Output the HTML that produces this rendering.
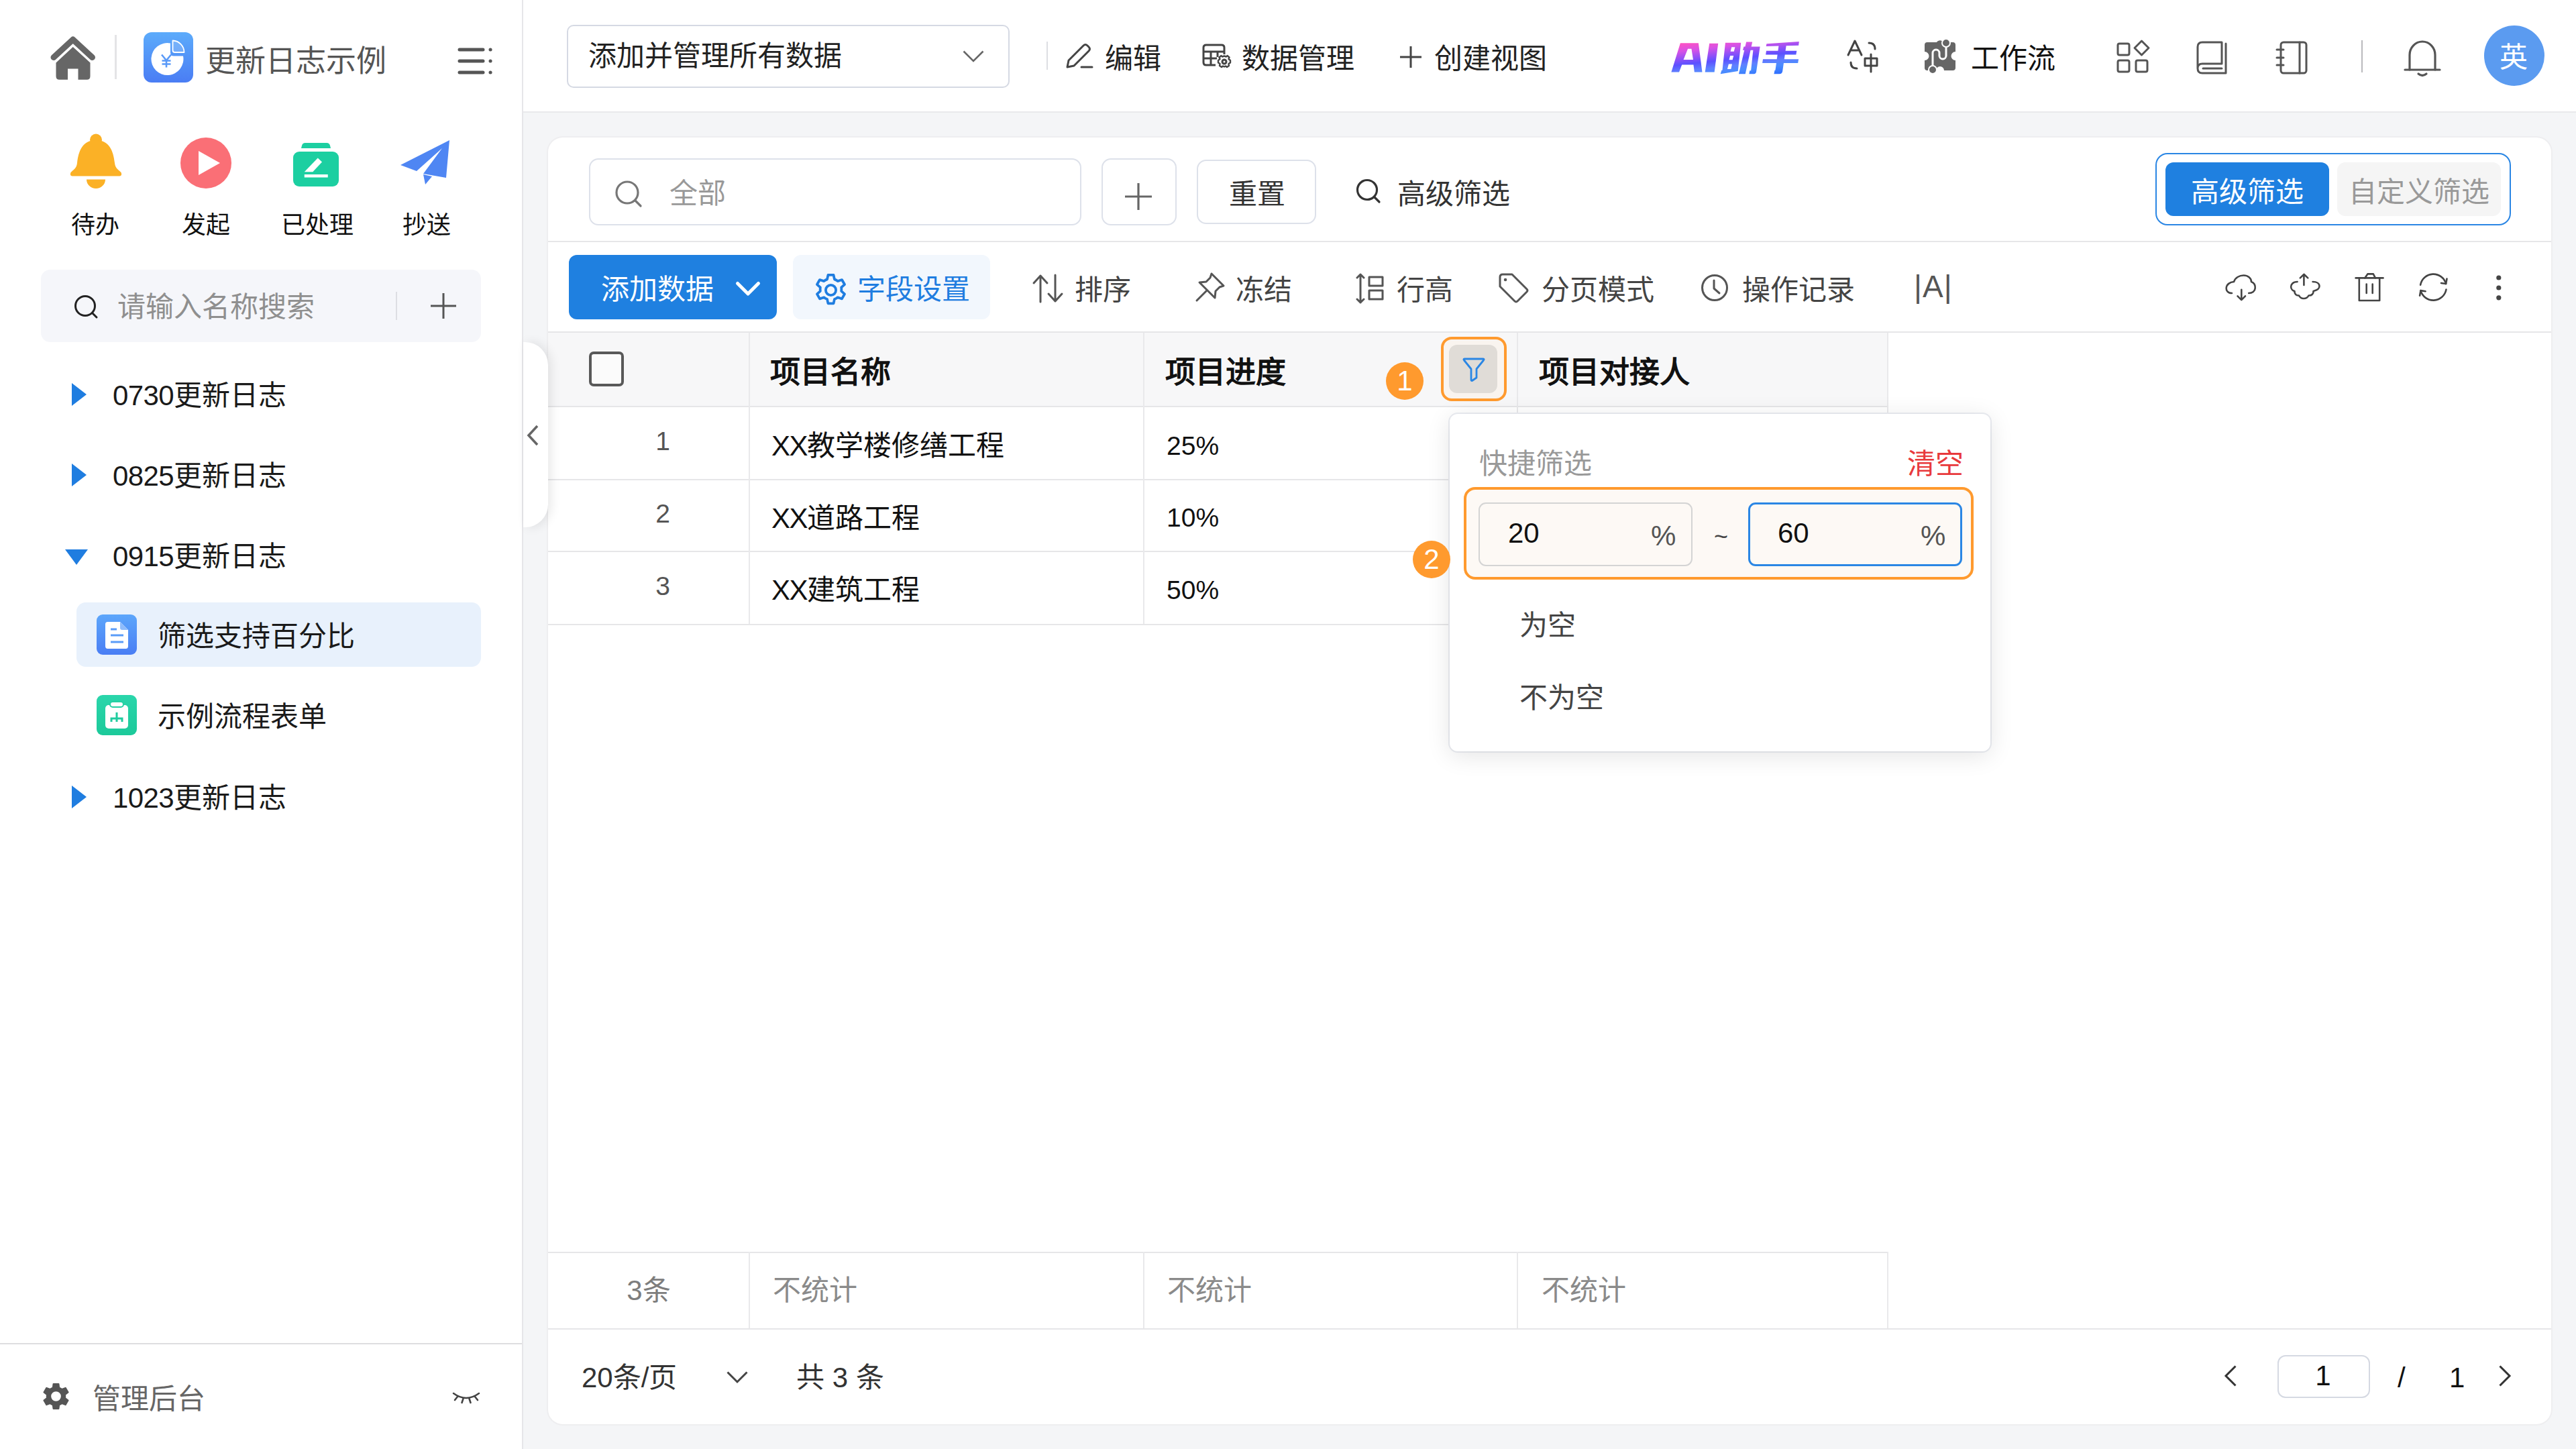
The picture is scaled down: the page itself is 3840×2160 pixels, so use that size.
<!DOCTYPE html>
<html lang="zh-CN">
<head>
<meta charset="utf-8">
<title>更新日志示例</title>
<style>
*{box-sizing:border-box;margin:0;padding:0}
html,body{width:3840px;height:2160px;overflow:hidden;background:#f4f5f7}
body{font-family:"Liberation Sans",sans-serif;font-size:42px;color:#1f1f1f;position:relative;line-height:1}
.abs{position:absolute}
svg{display:block;overflow:visible}
.t{position:absolute;white-space:nowrap;line-height:60px;height:60px}

/* ---------- sidebar ---------- */
#sidebar{position:absolute;left:0;top:0;width:780px;height:2160px;background:#fff;border-right:2px solid #e6e6e9}
#sb-title{left:306px;top:62px;font-size:45px;color:#555}
.quick{position:absolute;top:312px;width:160px;text-align:center;font-size:36px;line-height:48px;color:#111}
#sb-search{position:absolute;left:61px;top:402px;width:656px;height:108px;background:#f5f6fa;border-radius:14px}
#sb-search .ph{left:114px;top:26px;color:#8f8f8f}
.tree{position:absolute;left:0;width:780px;height:96px}
.tree .lbl{left:168px;top:20px;color:#1a1a1a}
.tree.sub .lbl{left:235px;top:21px}
.tree.sel:before{content:"";position:absolute;left:114px;top:0;width:603px;height:96px;background:#e8f1fc;border-radius:14px}
.dg{letter-spacing:-.6px}
.ticon{position:absolute;left:144px;top:18px;width:60px;height:60px;border-radius:9px}
#sb-foot{position:absolute;left:0;top:2002px;width:778px;height:158px;border-top:2px solid #dedee0;background:#fff}
#sb-foot .lbl{left:138px;top:52px;color:#666}

/* ---------- top bar ---------- */
#topbar{position:absolute;left:780px;top:0;width:3060px;height:168px;background:#fff;border-bottom:2px solid #e9e9ec}
#viewsel{position:absolute;left:65px;top:37px;width:660px;height:94px;border:2px solid #d5d9e3;border-radius:10px;background:#fff}
#viewsel .lbl{left:30px;top:15px;color:#222}
.tb-t{top:58px;color:#222}
#avatar{position:absolute;left:2923px;top:38px;width:90px;height:90px;border-radius:50%;background:#5b9bf0;color:#fff;text-align:center;line-height:96px;font-size:42px;text-indent:-3px}

/* ---------- card ---------- */
#card{position:absolute;left:817px;top:205px;width:2986px;height:1918px;background:#fff;border-radius:22px;box-shadow:0 0 0 2px #eeeef0}
.box{position:absolute;border:2px solid #dde1ea;border-radius:14px;background:#fff}
.hline{position:absolute;left:0;height:2px;background:#e6e6e8}
.vline{position:absolute;width:2px;background:#e9e9eb}
.tool{top:198px;color:#444}
.th{font-weight:bold;font-size:45px;color:#111;top:321px}
.td{color:#111}
.xx{letter-spacing:-1.5px}
.num{color:#555;font-size:39px;width:342px;text-align:center;left:0}
.sum{color:#8a8a8a;top:1689px}

/* ---------- popup ---------- */
#pop{position:absolute;left:2161px;top:617px;width:806px;height:503px;background:#fff;border-radius:12px;box-shadow:0 6px 36px rgba(0,0,0,.11),0 0 0 2px #eceef3;z-index:5}
.badge{z-index:6;position:absolute;width:56px;height:56px;border-radius:50%;background:#ff9a2e;color:#fff;font-size:42px;line-height:56px;text-align:center}
.inp{position:absolute;top:19px;width:319px;height:95px;border:2px solid #d4d4d4;border-radius:11px;background:#fdf9f5;font-size:42px}
.inp .v{left:42px;top:14px;color:#111}
.inp .p{left:255px;top:18px;color:#555}
</style>
</head>
<body>

<!-- ================= SIDEBAR ================= -->
<div id="sidebar">
  <!-- home -->
  <svg class="abs" style="left:74px;top:52px" width="70" height="68" viewBox="0 0 70 68"><path d="M6 33.500 L34.750 7 L63.500 33.500" fill="none" stroke="#666" stroke-width="9" stroke-linecap="round" stroke-linejoin="round"/><path d="M34.750 18 L60.500 41.500 V61.500 Q60.500 66.750 55.500 66.750 H42.500 V50.500 H27 V66.750 H14.500 Q9.500 66.750 9.500 61.500 V41.500 Z" fill="#666"/></svg>
  <div class="abs" style="left:171px;top:52px;width:3px;height:66px;background:#e4e4e6"></div>
  <!-- app icon -->
  <svg class="abs" style="left:214px;top:48px" width="74" height="75" viewBox="0 0 74 75"><defs><linearGradient id="ga" x1="0" y1="0" x2="0" y2="1"><stop offset="0" stop-color="#5cabfb"/><stop offset="1" stop-color="#4a7df4"/></linearGradient></defs><rect width="74" height="75" rx="12" fill="url(#ga)"/><path d="M40 16.500 A24 24 0 1 0 59 35.500 L45 35.500 Q40 35.500 40 30.500 Z" fill="#fff"/><path d="M43.500 12.500 A17.500 17.500 0 0 1 60.500 30 H46.500 Q43.500 30 43.500 27 Z" fill="#fff" fill-opacity=".18" stroke="#fff" stroke-width="1.800" stroke-linejoin="round"/><path d="M27 33.500 l7 8.500 l7 -8.500 M34 42 v10.500 M27.500 42.500 h13 M27.500 47.500 h13" stroke="#5a9af8" stroke-width="2.600" fill="none"/></svg>
  <div class="t" id="sb-title">更新日志示例</div>
  <!-- menu icon -->
  <svg class="abs" style="left:682px;top:70px" width="54" height="42" viewBox="0 0 54 42"><g stroke="#555" stroke-width="5" stroke-linecap="round"><path d="M3 4 H38 M3 21 H38 M3 38 H38"/><path d="M49 4 h.1 M49 21 h.1 M49 38 h.1"/></g></svg>

  <!-- quick actions -->
  <svg class="abs" style="left:104px;top:199px" width="78" height="83" viewBox="0 0 78 83"><circle cx="39" cy="9.500" r="9" fill="#fbb126"/><path d="M39 10 C19 10 13 26 11 44 C10 53 5 54 1.500 58 Q-.5 63 4 63.500 H74 Q78.500 63 76.500 58 C73 54 68 53 67 44 C65 26 59 10 39 10 Z" fill="#fbb126"/><path d="M25 68.500 H53 A14 13.500 0 0 1 25 68.500 Z" fill="#fbb126"/></svg>
  <svg class="abs" style="left:269px;top:205px" width="76" height="76" viewBox="0 0 76 76"><circle cx="38" cy="38" r="38" fill="#fa6f76"/><path d="M27 20 L59 38 L27 56 Z" fill="#fff"/></svg>
  <svg class="abs" style="left:437px;top:213px" width="68" height="65" viewBox="0 0 68 65"><path d="M18 0 H50 Q54 0 55 4 L56 8 H12 L13 4 Q14 0 18 0 Z" fill="#1ccfa1"/><rect x="0" y="13" width="68" height="52" rx="9" fill="#1ccfa1"/><path d="M16.750 43.250 L36.750 22.500 L43 28.500 L29.250 43.250 Z" fill="#fff"/><rect x="16.750" y="47" width="35" height="4.500" fill="#fff"/></svg>
  <svg class="abs" style="left:597px;top:209px" width="74" height="67" viewBox="0 0 74 67"><path d="M73 0 L0 37 L24 46 L62 12 L34 50 L68 56 Z" fill="#4f86f3"/><path d="M34 51 L47 54 L37 66 Z" fill="#4f86f3"/></svg>
  <div class="quick" style="left:62px">待办</div>
  <div class="quick" style="left:227px">发起</div>
  <div class="quick" style="left:393px">已处理</div>
  <div class="quick" style="left:556px">抄送</div>

  <!-- search -->
  <div id="sb-search">
    <svg class="abs" style="left:49px;top:37px" width="38" height="38" viewBox="0 0 38 38"><circle cx="17" cy="17" r="14.500" fill="none" stroke="#222" stroke-width="3"/><path d="M27.500 27.500 L34 34" stroke="#222" stroke-width="3" stroke-linecap="round"/></svg>
    <div class="t ph">请输入名称搜索</div>
    <div class="abs" style="left:529px;top:33px;width:2px;height:42px;background:#dddee3"></div>
    <svg class="abs" style="left:580px;top:34px" width="40" height="40" viewBox="0 0 40 40"><path d="M20 1 V39 M1 20 H39" stroke="#555" stroke-width="3"/></svg>
  </div>

  <!-- tree -->
  <div class="tree" style="top:540px"><svg class="abs" style="left:107px;top:31px" width="22" height="34" viewBox="0 0 22 34"><path d="M0 0 L22 17 L0 34 Z" fill="#1f7de0"/></svg><div class="t lbl"><span class="dg">0730</span>更新日志</div></div>
  <div class="tree" style="top:660px"><svg class="abs" style="left:107px;top:31px" width="22" height="34" viewBox="0 0 22 34"><path d="M0 0 L22 17 L0 34 Z" fill="#1f7de0"/></svg><div class="t lbl"><span class="dg">0825</span>更新日志</div></div>
  <div class="tree" style="top:780px"><svg class="abs" style="left:97px;top:39px" width="34" height="23" viewBox="0 0 34 23"><path d="M0 0 H34 L17 23 Z" fill="#1f7de0"/></svg><div class="t lbl"><span class="dg">0915</span>更新日志</div></div>
  <div class="tree sub sel" style="top:898px">
    <svg class="ticon" viewBox="0 0 60 60"><defs><linearGradient id="gb" x1="0" y1="0" x2="0" y2="1"><stop offset="0" stop-color="#5ca6fb"/><stop offset="1" stop-color="#4a7ef4"/></linearGradient></defs><rect width="60" height="60" rx="9" fill="url(#gb)"/><path d="M16.500 11 H35 L47 23 V47 Q47 51 43.500 51 H16.500 Q13 51 13 47 V14.500 Q13 11 16.500 11 Z" fill="#fff"/><path d="M35 11 V20 Q35 23 38 23 H47 Z" fill="#8fbcfb"/><path d="M21 22 H30 M21 31 H40 M21 41 H40" stroke="#5a9cf8" stroke-width="3"/></svg>
    <div class="t lbl">筛选支持百分比</div>
  </div>
  <div class="tree sub" style="top:1018px">
    <svg class="ticon" viewBox="0 0 60 60"><defs><linearGradient id="gc" x1="0" y1="0" x2="0" y2="1"><stop offset="0" stop-color="#2ad6ab"/><stop offset="1" stop-color="#1cc99a"/></linearGradient></defs><rect width="60" height="60" rx="9" fill="url(#gc)"/><rect x="13" y="15" width="34" height="35" rx="5" fill="#fff"/><rect x="20" y="10" width="20" height="8" rx="4" fill="#fff" stroke="#25d0a3" stroke-width="2"/><path d="M30 26 v7 M22 40 v-5 h16 v5 M30 33 v7" stroke="#20cc9f" stroke-width="3" fill="none"/></svg>
    <div class="t lbl">示例流程表单</div>
  </div>
  <div class="tree" style="top:1140px"><svg class="abs" style="left:107px;top:31px" width="22" height="34" viewBox="0 0 22 34"><path d="M0 0 L22 17 L0 34 Z" fill="#1f7de0"/></svg><div class="t lbl"><span class="dg">1023</span>更新日志</div></div>

  <!-- footer -->
  <div id="sb-foot">
    <svg class="abs" style="left:59px;top:53px" width="49" height="49" viewBox="0 0 24 24"><path fill="#555" d="M19.14 12.94c.04-.3.06-.61.06-.94 0-.32-.02-.64-.07-.94l2.03-1.58a.49.49 0 0 0 .12-.61l-1.92-3.32a.49.49 0 0 0-.59-.22l-2.39.96c-.5-.38-1.03-.7-1.62-.94l-.36-2.54a.48.48 0 0 0-.48-.41h-3.84c-.24 0-.43.17-.47.41l-.36 2.54c-.59.24-1.13.57-1.62.94l-2.39-.96a.49.49 0 0 0-.59.22L2.74 8.87c-.12.21-.08.47.12.61l2.03 1.58c-.05.3-.09.63-.09.94s.02.64.07.94l-2.03 1.58a.49.49 0 0 0-.12.61l1.92 3.32c.12.22.37.29.59.22l2.39-.96c.5.38 1.03.7 1.62.94l.36 2.54c.05.24.24.41.48.41h3.84c.24 0 .44-.17.47-.41l.36-2.54c.59-.24 1.13-.56 1.62-.94l2.39.96c.22.08.47 0 .59-.22l1.92-3.32c.12-.22.07-.47-.12-.61l-2.01-1.58zM12 15.6A3.6 3.6 0 1 1 12 8.4a3.6 3.6 0 0 1 0 7.2z"/></svg>
    <div class="t lbl">管理后台</div>
    <svg class="abs" style="left:674px;top:70px" width="42" height="20" viewBox="0 0 42 20"><g fill="none" stroke="#444" stroke-width="2.6" stroke-linecap="round"><path d="M2 3 Q21 17 40 3"/><path d="M8 8 L4 13 M16.500 11 L14.500 17 M25.500 11 L27.500 17 M34 8 L38 13"/></g></svg>
  </div>
</div>

<!-- ================= TOP BAR ================= -->
<div id="topbar">
  <div id="viewsel">
    <div class="t lbl">添加并管理所有数据</div>
    <svg class="abs" style="left:588px;top:36px" width="32" height="18" viewBox="0 0 32 18"><path d="M1.500 1.500 L16 16 L30.500 1.500" fill="none" stroke="#666" stroke-width="2.600"/></svg>
  </div>
  <div class="abs" style="left:780px;top:62px;width:2px;height:42px;background:#dddee3"></div>
  <!-- edit -->
  <svg class="abs" style="left:808px;top:65px" width="42" height="38" viewBox="0 0 42 38"><g fill="none" stroke="#444" stroke-width="3" stroke-linejoin="round" stroke-linecap="round"><path d="M3 35 L5 25 L27 3 Q30 0 33 3 L35 5 Q38 8 35 11 L13 33 Z"/><path d="M24 35 H40"/></g></svg>
  <div class="t tb-t" style="left:867px">编辑</div>
  <!-- data mgmt -->
  <svg class="abs" style="left:1012px;top:65px" width="44" height="38" viewBox="0 0 44 38"><g fill="none" stroke="#444" stroke-width="3"><path d="M33 16 V6 Q33 2 29 2 H6 Q2 2 2 6 V28 Q2 32 6 32 H20"/><path d="M2 12 H33 M2 22 H22 M13 12 V32 M23 12 V20"/><circle cx="33" cy="27" r="3"/><path d="M33 18.5 l3 1 l1.5 -1.5 l3 2.5 l-1 2.5 l2.5 2 v3.5 l-2.5 1.5 l.5 3 l-3 2 l-2 -1.5 l-2 1 l-2 -1 l-2 1.5 l-3 -2 l.5 -3 l-2.5 -1.5 v-3.500 l2.5 -2 l-1 -2.500 l3 -2.500 l1.500 1.500 z" stroke-width="2.4" stroke-linejoin="round"/></g></svg>
  <div class="t tb-t" style="left:1071px">数据管理</div>
  <!-- create view -->
  <svg class="abs" style="left:1306px;top:68px" width="34" height="34" viewBox="0 0 34 34"><path d="M17 1 V33 M1 17 H33" stroke="#444" stroke-width="3"/></svg>
  <div class="t tb-t" style="left:1358px">创建视图</div>

  <!-- AI logo -->
  <svg class="abs" style="left:1708.600px;top:60.500px" width="195.700" height="50.300" viewBox="200 220 2100 540"><defs><linearGradient id="gai" gradientUnits="userSpaceOnUse" x1="600" y1="230" x2="675" y2="892"><stop offset="0" stop-color="#ff52c0"/><stop offset=".2" stop-color="#d652e6"/><stop offset=".4" stop-color="#8a50f8"/><stop offset=".52" stop-color="#5b50ff"/><stop offset=".68" stop-color="#5f80ff"/><stop offset=".8" stop-color="#4a8cff"/><stop offset="1" stop-color="#2f6fff"/></linearGradient></defs><g fill="url(#gai)" fill-rule="evenodd"><path d="M370 255 H660 L720 720 H595 L580 600 H395 L350 720 H225 Z M490 345 L420 520 H575 L548 345 Z"/><path d="M835 260 H975 L915 720 H765 Z"/><path d="M1090 250 H1340 L1292 702 L1012 748 L1030 690 L1042 690 Z M1190 320 H1245 L1228 388 H1172 Z M1167 455 H1222 L1205 522 H1150 Z M1143 590 H1198 L1180 672 H1122 Z"/><path d="M1385 310 H1645 L1585 715 Q1580 748 1548 748 H1470 L1480 695 H1500 L1535 368 H1370 Z"/><path d="M1425 235 H1522 L1410 748 H1305 Z"/><path d="M1750 266 L2270 232 L2262 293 L1742 306 Z"/><path d="M1745 378 H2232 L2222 440 H1737 Z"/><path d="M1692 512 H2262 L2252 575 H1682 Z"/><path d="M1945 290 H2065 L2005 705 Q1998 748 1955 748 H1868 L1880 690 H1890 Z"/></g></svg>
  <!-- translate -->
  <svg class="abs" style="left:1973px;top:58px" width="50" height="52" viewBox="0 0 50 52"><g fill="none" stroke="#444" stroke-width="3" stroke-linecap="round" stroke-linejoin="round"><path d="M2 24 L12 3 L22 24 M6 17 H18"/><path d="M33 6 Q42 6 42 15"/><path d="M15 44 Q6 44 6 35"/><path d="M27 29 H45 V40 H27 Z M36 23 V49"/></g></svg>
  <!-- workflow -->
  <svg class="abs" style="left:2088px;top:57px" width="48" height="54" viewBox="0 0 48 54"><path d="M5 6 H19 A6 6 0 0 1 29 6 H43 Q47 6 47 10 V20 A6.500 6.500 0 0 0 47 33 V44 Q47 48 43 48 H30 A6 6 0 0 0 18 48 H5 Q1 48 1 44 V33 A6.500 6.500 0 0 0 1 20 V10 Q1 6 5 6 Z" fill="#666"/><g fill="none" stroke="#fff" stroke-width="3"><path d="M33 10 V26 A5 5 0 0 1 23 26 V22 A5 5 0 0 0 13 22 V44"/></g><circle cx="33" cy="7" r="6" fill="#666" stroke="#fff" stroke-width="2"/><circle cx="13" cy="47" r="6" fill="#666" stroke="#fff" stroke-width="2"/></svg>
  <div class="t tb-t" style="left:2158px;color:#111">工作流</div>
  <!-- apps -->
  <svg class="abs" style="left:2375px;top:59px" width="50" height="50" viewBox="0 0 50 50"><g fill="none" stroke="#555" stroke-width="3" stroke-linejoin="round"><rect x="2" y="6" width="17" height="17" rx="2.500"/><rect x="2" y="31" width="17" height="17" rx="2.500"/><rect x="29" y="31" width="17" height="17" rx="2.500"/><path d="M37.500 2 L48 12.500 L37.500 23 L27 12.500 Z"/></g></svg>
  <!-- book -->
  <svg class="abs" style="left:2494px;top:61px" width="46" height="50" viewBox="0 0 46 50"><g fill="none" stroke="#555" stroke-width="3" stroke-linejoin="round" stroke-linecap="round"><path d="M2 41 V9 Q2 2 9 2 H38 V34 H9 Q2 34 2 41 Q2 48 9 48 H44 V4"/><path d="M10 41 H38"/></g></svg>
  <!-- notebook -->
  <svg class="abs" style="left:2612px;top:61px" width="50" height="50" viewBox="0 0 50 50"><g fill="none" stroke="#555" stroke-width="3" stroke-linejoin="round" stroke-linecap="round"><rect x="8" y="2" width="38" height="46" rx="4"/><path d="M36 2 V48"/><path d="M2 13 H12 M2 25 H12 M2 36 H12"/></g></svg>
  <div class="abs" style="left:2740px;top:60px;width:2px;height:48px;background:#b9b9bd"></div>
  <!-- bell -->
  <svg class="abs" style="left:2803px;top:58px" width="56" height="58" viewBox="0 0 56 58"><g fill="none" stroke="#555" stroke-width="3.200" stroke-linecap="round" stroke-linejoin="round"><path d="M2 46 H54"/><path d="M9 46 V24 A19 20 0 0 1 47 24 V46"/><path d="M22 52 Q28 57 34 52"/></g></svg>
  <div id="avatar">英</div>
</div>
<!-- ================= COLLAPSE HANDLE ================= -->
<div class="abs" style="left:780px;top:510px;width:37px;height:276px;background:#fff;border-radius:0 34px 34px 0;box-shadow:5px 0 16px rgba(0,0,0,.09);z-index:2"></div>

<!-- ================= CARD ================= -->
<div id="card">
  <!-- filter row -->
  <div class="box" style="left:61px;top:31px;width:734px;height:100px">
    <svg class="abs" style="left:36px;top:30px" width="42" height="42" viewBox="0 0 42 42"><circle cx="19" cy="19" r="16" fill="none" stroke="#777" stroke-width="3.200"/><path d="M31 31 L39 39" stroke="#777" stroke-width="3.200" stroke-linecap="round"/></svg>
    <div class="t" style="left:118px;top:21px;color:#999">全部</div>
  </div>
  <div class="box" style="left:825px;top:31px;width:112px;height:100px">
    <svg class="abs" style="left:32px;top:34px" width="42" height="42" viewBox="0 0 42 42"><path d="M21 1 V41 M1 21 H41" stroke="#666" stroke-width="3.200"/></svg>
  </div>
  <div class="box" style="left:967px;top:33px;width:178px;height:96px">
    <div class="t" style="left:46px;top:20px;color:#333">重置</div>
  </div>
  <svg class="abs" style="left:1204px;top:61px" width="38" height="38" viewBox="0 0 38 38"><circle cx="17" cy="17" r="14.500" fill="none" stroke="#333" stroke-width="3.200"/><path d="M28 28 L35 35" stroke="#333" stroke-width="3.200" stroke-linecap="round"/></svg>
  <div class="t" style="left:1266px;top:55px;color:#333">高级筛选</div>

  <!-- segmented -->
  <div class="abs" style="left:2396px;top:23px;width:530px;height:108px;border:2px solid #2a86e4;border-radius:18px;background:#fff">
    <div class="abs" style="left:13px;top:12px;width:244px;height:80px;border-radius:12px;background:#1f80e0;color:#fff;text-align:center;line-height:90px">高级筛选</div>
    <div class="abs" style="left:269px;top:12px;width:244px;height:80px;border-radius:12px;background:#f5f5f5;color:#999;text-align:center;line-height:90px">自定义筛选</div>
  </div>
  <div class="hline" style="top:154px;width:2986px"></div>

  <!-- toolbar -->
  <div class="abs" style="left:31px;top:175px;width:310px;height:96px;border-radius:12px;background:#1f80e0">
    <div class="t" style="left:48px;top:22px;color:#fff;font-weight:500">添加数据</div>
    <svg class="abs" style="left:249px;top:40px" width="36" height="22" viewBox="0 0 36 22"><path d="M2.500 2.500 L18 18 L33.500 2.500" fill="none" stroke="#fff" stroke-width="5" stroke-linecap="round" stroke-linejoin="round"/></svg>
  </div>
  <div class="abs" style="left:365px;top:175px;width:294px;height:96px;border-radius:12px;background:#f2f7fd">
    <svg class="abs" style="left:28px;top:24px" width="57" height="57" viewBox="0 0 24 24"><g fill="none" stroke="#1f7de0" stroke-width="1.600" stroke-linejoin="round"><circle cx="12" cy="12" r="3.200"/><path d="M10.300 2.500 h3.400 l.6 2.700 a7.200 7.200 0 0 1 2 1.150 l2.650 -.85 l1.700 2.950 l-2.050 1.850 a7.200 7.200 0 0 1 0 2.300 l2.050 1.850 l-1.700 2.950 l-2.650 -.85 a7.200 7.200 0 0 1 -2 1.150 l-.6 2.700 h-3.400 l-.6 -2.700 a7.200 7.200 0 0 1 -2 -1.150 l-2.650 .85 l-1.700 -2.950 l2.050 -1.850 a7.200 7.200 0 0 1 0 -2.300 l-2.050 -1.850 l1.700 -2.950 l2.650 .85 a7.200 7.200 0 0 1 2 -1.150 z"/></g></svg>
    <div class="t" style="left:96px;top:22px;color:#1f7de0">字段设置</div>
  </div>
  <!-- sort -->
  <svg class="abs" style="left:722px;top:203px" width="46" height="44" viewBox="0 0 46 44"><g fill="none" stroke="#555" stroke-width="3" stroke-linecap="round" stroke-linejoin="round"><path d="M12 42 V3 M2 14 L12 3 L22 14"/><path d="M34 2 V41 M24 30 L34 41 L44 30"/></g></svg>
  <div class="t tool" style="left:785px">排序</div>
  <!-- pin -->
  <svg class="abs" style="left:965px;top:201px" width="44" height="44" viewBox="0 0 44 44"><g fill="none" stroke="#555" stroke-width="3" stroke-linejoin="round" stroke-linecap="round"><path d="M24 2 L42 20 L36 22 L30 28 L29 38 L6 15 L16 14 L22 8 Z"/><path d="M17 27 L2 42"/></g></svg>
  <div class="t tool" style="left:1025px">冻结</div>
  <!-- row height -->
  <svg class="abs" style="left:1204px;top:201px" width="42" height="48" viewBox="0 0 42 48"><g fill="none" stroke="#555" stroke-width="3" stroke-linejoin="round" stroke-linecap="round"><path d="M7 3 V45 M2 8 L7 3 L12 8 M2 40 L7 45 L12 40"/><rect x="20" y="7" width="20" height="13"/><rect x="20" y="27" width="20" height="13"/></g></svg>
  <div class="t tool" style="left:1265px">行高</div>
  <!-- tag -->
  <svg class="abs" style="left:1416px;top:201px" width="46" height="46" viewBox="0 0 46 46"><g fill="none" stroke="#555" stroke-width="3" stroke-linejoin="round" stroke-linecap="round"><path d="M3 7 Q3 3 7 3 L21 3 L43 25 Q45 27 43 29 L29 43 Q27 45 25 43 L3 21 Z"/><path d="M11 11 h.1" stroke-width="4.500"/></g></svg>
  <div class="t tool" style="left:1481px">分页模式</div>
  <!-- clock -->
  <svg class="abs" style="left:1718px;top:203px" width="42" height="42" viewBox="0 0 42 42"><g fill="none" stroke="#555" stroke-width="3" stroke-linecap="round" stroke-linejoin="round"><circle cx="21" cy="21" r="18.500"/><path d="M20 10 V22 L28 29"/></g></svg>
  <div class="t tool" style="left:1780px">操作记录</div>
  <div class="t" style="left:2036px;top:192px;color:#555;font-size:46px;letter-spacing:1px">|A|</div>
  <!-- right icons -->
  <svg class="abs" style="left:2500px;top:204px" width="46" height="40" viewBox="0 0 46 40"><g fill="none" stroke="#444" stroke-width="2.600" stroke-linecap="round" stroke-linejoin="round"><path d="M10 28 C4 28 1.500 24 1.700 20.500 C2 15 7 11.500 13 11 C15 5 21 1.500 27.500 1.500 C34 1.500 39 5.500 39 11 C43 12.500 45 16.500 44.700 20.700 C44.400 25 40.500 28 35.200 28"/><path d="M24.300 22.800 V38 M18.500 32.300 L24.300 38.100 L30 32.300"/></g></svg>
  <svg class="abs" style="left:2596px;top:202px" width="46" height="42" viewBox="0 0 46 42"><g fill="none" stroke="#444" stroke-width="2.600" stroke-linecap="round" stroke-linejoin="round"><path d="M11.600 13 C5 13 2 17 2.100 20.500 C2.200 24 5 26.500 7.500 27 C7 31 10 34 14 33.500 C15.500 36.500 18 38 21 38 C24 38 27 36.500 28.500 33.500 C33 34 36 30.500 35.500 27 C40 26 44.500 23.500 44.500 19.600 C44.500 15.500 40.500 13 34.600 13"/><path d="M21.400 18 V2 M15.800 7.400 L21.400 1.800 L27.300 7.400"/></g></svg>
  <svg class="abs" style="left:2694px;top:201px" width="42" height="44" viewBox="0 0 42 44"><g fill="none" stroke="#444" stroke-width="2.600" stroke-linejoin="round" stroke-linecap="round"><path d="M.600 8.400 H41.500"/><path d="M14.200 8.400 L18.400 2.400 H26.800 L29.900 8.400"/><path d="M5.800 8.400 V42 H36.200 V8.400"/><path d="M16.700 17.500 V31 M25.700 17.500 V31"/></g></svg>
  <svg class="abs" style="left:2788px;top:201px" width="46" height="46" viewBox="0 0 46 46"><g fill="none" stroke="#444" stroke-width="2.600" stroke-linecap="round" stroke-linejoin="round"><path d="M3.100 18.710 A19.500 19.500 0 0 1 41.140 17.050"/><path d="M41.500 25.490 A19.500 19.500 0 0 1 3.460 27.150"/><path d="M42.500 9.500 L41.140 17.050 L34 16"/><path d="M2.100 34.700 L3.460 27.150 L10.600 28.200"/></g></svg>
  <svg class="abs" style="left:2902px;top:205px" width="12" height="38" viewBox="0 0 12 38"><circle cx="5.800" cy="4" r="3.600" fill="#444"/><circle cx="5.800" cy="19" r="3.600" fill="#444"/><circle cx="5.800" cy="33.800" r="3.600" fill="#444"/></svg>

  <!-- table -->
  <div class="hline" style="top:289px;width:2986px"></div>
  <div class="abs" style="left:0;top:291px;width:1998px;height:109px;background:#f7f7f8"></div>
  <div class="hline" style="top:400px;width:1998px"></div>
  <div class="hline" style="top:509px;width:1998px"></div>
  <div class="hline" style="top:616px;width:1998px"></div>
  <div class="hline" style="top:725px;width:1998px"></div>
  <div class="vline" style="left:299px;top:291px;height:434px"></div>
  <div class="vline" style="left:887px;top:291px;height:434px"></div>
  <div class="vline" style="left:1444px;top:291px;height:434px"></div>
  <div class="vline" style="left:1996px;top:291px;height:434px"></div>
  <div class="abs" style="left:61px;top:319px;width:52px;height:52px;border:4px solid #595959;border-radius:7px;background:#fbfbfb"></div>
  <div class="t th" style="left:331px">项目名称</div>
  <div class="t th" style="left:920px">项目进度</div>
  <div class="t th" style="left:1477px">项目对接人</div>
  <div class="t num" style="top:423px">1</div>
  <div class="t num" style="top:531px">2</div>
  <div class="t num" style="top:639px">3</div>
  <div class="t td" style="left:333px;top:430px"><span class="xx">XX</span>教学楼修缮工程</div>
  <div class="t td" style="left:333px;top:538px"><span class="xx">XX</span>道路工程</div>
  <div class="t td" style="left:333px;top:645px"><span class="xx">XX</span>建筑工程</div>
  <div class="t td" style="left:922px;top:430px;font-size:39px">25%</div>
  <div class="t td" style="left:922px;top:537px;font-size:39px">10%</div>
  <div class="t td" style="left:922px;top:645px;font-size:39px">50%</div>

  <!-- filter button -->
  <div class="abs" style="left:1331px;top:297px;width:98px;height:96px;border:4px solid #ff9a2e;border-radius:16px;background:#f9f4ef">
    <div class="abs" style="left:8px;top:8px;width:72px;height:72px;border-radius:12px;background:#e0dcd7"></div>
    <svg class="abs" style="left:28px;top:27px" width="34" height="37" viewBox="0 0 34 37"><path d="M3 2 H31 Q33 2 31.500 4 L21 17 V30 L14.500 34.500 Q13 35 13 33 V17 L2.500 4 Q1 2 3 2 Z" fill="none" stroke="#2a86e4" stroke-width="2.800" stroke-linejoin="round"/></svg>
  </div>
  <div class="badge" style="left:1249px;top:335px">1</div>

  <!-- summary -->
  <div class="hline" style="top:1661px;width:1998px"></div>
  <div class="vline" style="left:299px;top:1661px;height:115px"></div>
  <div class="vline" style="left:887px;top:1661px;height:115px"></div>
  <div class="vline" style="left:1444px;top:1661px;height:115px"></div>
  <div class="vline" style="left:1996px;top:1661px;height:115px"></div>
  <div class="hline" style="top:1775px;width:2986px"></div>
  <div class="t sum" style="left:0;width:300px;text-align:center;color:#7d7d7d">3条</div>
  <div class="t sum" style="left:335px">不统计</div>
  <div class="t sum" style="left:923px">不统计</div>
  <div class="t sum" style="left:1481px">不统计</div>

  <!-- pagination -->
  <div class="t" style="left:50px;top:1819px;color:#333">20条/页</div>
  <svg class="abs" style="left:266px;top:1839px" width="32" height="18" viewBox="0 0 32 18"><path d="M1.500 1.500 L16 16 L30.500 1.500" fill="none" stroke="#444" stroke-width="3"/></svg>
  <div class="t" style="left:370px;top:1819px;color:#333">共 3 条</div>
  <svg class="abs" style="left:2499px;top:1830px" width="18" height="32" viewBox="0 0 18 32"><path d="M16.500 1.500 L2 16 L16.500 30.500" fill="none" stroke="#333" stroke-width="3"/></svg>
  <div class="box" style="left:2578px;top:1815px;width:138px;height:64px;border-color:#d5d9e2;border-radius:12px"><div class="t" style="left:0;top:0;width:132px;text-align:center;color:#111;line-height:58px;height:58px">1</div></div>
  <div class="t" style="left:2757px;top:1819px;color:#111">/</div>
  <div class="t" style="left:2834px;top:1819px;color:#111">1</div>
  <svg class="abs" style="left:2908px;top:1830px" width="18" height="32" viewBox="0 0 18 32"><path d="M1.500 1.500 L16 16 L1.500 30.500" fill="none" stroke="#333" stroke-width="3"/></svg>
</div>

<!-- collapse chevron (above card) -->
<svg class="abs" style="left:785px;top:633px;z-index:3" width="18" height="32" viewBox="0 0 18 32"><path d="M16 2 L3 16 L16 30" fill="none" stroke="#666" stroke-width="3.600"/></svg>

<!-- ================= POPUP ================= -->
<div id="pop">
  <div class="t" style="left:44px;top:45px;color:#999">快捷筛选</div>
  <div class="t" style="left:682px;top:45px;color:#e8393c">清空</div>
  <div class="abs" style="left:21px;top:109px;width:760px;height:138px;border:4px solid #ff9a2e;border-radius:17px;background:#fdf9f5">
    <div class="inp" style="left:18px"><div class="t v">20</div><div class="t p">%</div></div>
    <div class="t" style="left:369px;top:40px;color:#444;font-size:36px">~</div>
    <div class="inp" style="left:420px;border-color:#2a86e4;border-width:3px"><div class="t v" style="left:41px;top:13px">60</div><div class="t p" style="left:254px;top:17px">%</div></div>
  </div>
  <div class="t" style="left:104px;top:286px;color:#444">为空</div>
  <div class="t" style="left:104px;top:394px;color:#444">不为空</div>
</div>
<div class="badge" style="left:2106px;top:806px">2</div>



</body>
</html>
